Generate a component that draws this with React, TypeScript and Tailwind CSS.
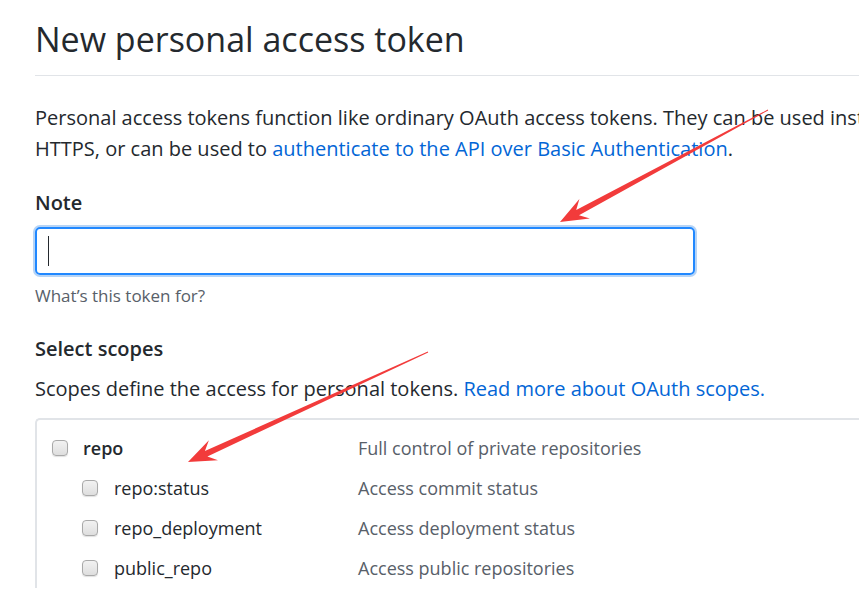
import React from 'react';

const font = { fontFamily: '"Open Sans", "Noto Sans", sans-serif' };

type Pt = [number, number];

// tapered annotation arrow, thin at tail, notched head at the tip
function arrowPoints(tail: Pt, tip: Pt) {
  const dx = tip[0] - tail[0];
  const dy = tip[1] - tail[1];
  const len = Math.hypot(dx, dy);
  const ux = dx / len;
  const uy = dy / len;
  const nx = -uy;
  const ny = ux;
  const at = (d: number, w: number): Pt => [tip[0] - ux * d + nx * w, tip[1] - uy * d + ny * w];
  const pts: Pt[] = [
    at(len, 0.4),
    at(20, 3),
    at(28, 11),
    tip,
    at(28, -11),
    at(20, -3),
    at(len, -0.4),
  ];
  return pts.map((p) => `${p[0].toFixed(1)},${p[1].toFixed(1)}`).join(' ');
}

const Checkbox: React.FC = () => (
  <span className="inline-block w-[16px] h-[16px] rounded-[4px] border border-[#a9a9a9] bg-gradient-to-b from-[#f2f2f2] to-[#dedede] shadow-[0_1px_1px_rgba(0,0,0,0.12)] shrink-0" />
);

const scopes = [
  { name: 'repo:status', desc: 'Access commit status' },
  { name: 'repo_deployment', desc: 'Access deployment status' },
  { name: 'public_repo', desc: 'Access public repositories' },
];

export default function App() {
  return (
    <div className="relative w-[859px] h-[591px] overflow-hidden bg-white text-[#24292e]" style={font}>
      <div className="w-[1100px] pl-[35px]">
        <div className="pt-[14px] pb-[11px] border-b border-[#e1e4e8]">
          <h1 className="text-[34px] leading-[50px] font-normal">New personal access token</h1>
        </div>

        <p className="mt-[26px] text-[20px] leading-[31px] whitespace-nowrap">
          Personal access tokens function like ordinary OAuth access tokens. They can be used instead of passwords for Git over
          <br />
          HTTPS, or can be used to{' '}
          <span className="text-[#0366d6]">authenticate to the API over Basic Authentication</span>.
        </p>

        <div className="mt-[24px] text-[20px] leading-[30px] font-semibold">Note</div>
        <div className="mt-[9px] w-[660px] h-[48px] rounded-[5px] border-2 border-[#2188ff] ring-2 ring-[#b6d4f6] flex items-center pl-[11px]">
          <span className="w-px h-[30px] bg-[#24292e]" />
        </div>
        <div className="mt-[9px] text-[17px] leading-[24px] text-[#586069]">What’s this token for?</div>

        <div className="mt-[26px] text-[20px] leading-[30px] font-semibold">Select scopes</div>
        <p className="mt-[9px] text-[20px] leading-[31px] whitespace-nowrap">
          Scopes define the access for personal tokens.{' '}
          <span className="text-[#0366d6]">Read more about OAuth scopes.</span>
        </p>

        <div className="mt-[14px] border-l-2 border-t-2 border-[#e1e4e8] rounded-tl-[5px] pt-[8px]">
          <div className="h-[40px] flex items-center">
            <div className="w-[321px] flex items-center pl-[15px] gap-[15px]">
              <Checkbox />
              <span className="text-[18px] font-semibold">repo</span>
            </div>
            <span className="text-[18px] text-[#586069]">Full control of private repositories</span>
          </div>
          {scopes.map((s) => (
            <div key={s.name} className="h-[40px] flex items-center">
              <div className="w-[321px] flex items-center pl-[45px] gap-[16px]">
                <Checkbox />
                <span className="text-[18px]">{s.name}</span>
              </div>
              <span className="text-[18px] text-[#586069]">{s.desc}</span>
            </div>
          ))}
        </div>
      </div>

      <svg className="absolute inset-0 pointer-events-none" width="859" height="591">
        <polygon points={arrowPoints([768, 110], [560, 222])} fill="#f23b3b" />
        <polygon points={arrowPoints([428, 352], [188, 462])} fill="#f23b3b" />
      </svg>
    </div>
  );
}
